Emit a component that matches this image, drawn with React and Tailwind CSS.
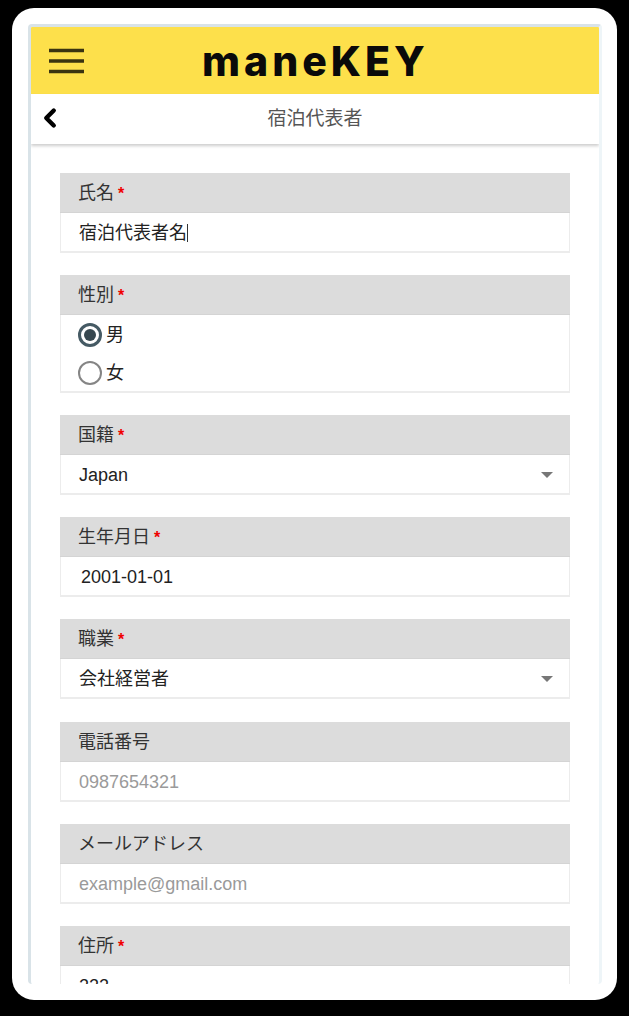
import { ChevronLeft } from "lucide-react";

const font = "font-['Liberation_Sans','Noto_Sans_CJK_JP',sans-serif]";

const Required = () => <span className="ml-1 text-[16px] leading-none font-bold text-[#f00000]">*</span>;

const Field = ({ label, required, mb = "mb-[22px]", children }) => (
  <div className={`${mb} border-x border-b-2 border-[#ececec]`}>
    <div className="-mx-px flex h-10 items-center border-b border-[#d4d4d4] bg-[#dcdcdc] pt-0.5 pl-[18px] text-[18px] text-[#333]">
      {label}
      {required && <Required />}
    </div>
    {children}
  </div>
);

const Value = ({ children, gray, arrow, date }) => (
  <div className={`flex h-[38px] items-center pt-0.5 pr-4 text-[18px] ${date ? "pl-5" : "pl-[18px]"} ${gray ? "text-[#9a9a9a]" : "text-[#222]"}`}>
    <span className="flex-1">{children}</span>
    {arrow && <span className="h-0 w-0 border-x-[6px] border-t-[6px] border-x-transparent border-t-[#777]" />}
  </div>
);

const Radio = ({ checked, label }) => (
  <div className="flex h-[38px] items-center pt-0.5 pl-[17px] text-[18px] text-[#222]">
    <span className={`mr-1 flex h-6 w-6 items-center justify-center rounded-full ${checked ? "border-[3px] border-[#455a64]" : "border-2 border-[#858585]"}`}>
      {checked && <span className="h-3 w-3 rounded-full bg-[#37474f]" />}
    </span>
    {label}
  </div>
);

export default function App() {
  return (
    <div className={`h-[1016px] w-[629px] overflow-hidden bg-black pt-2 pl-3 ${font}`}>
      <div className="h-[992px] w-[605px] rounded-[22px] bg-white px-4 pt-4">
        <div className="h-[960px] w-[574px] overflow-hidden rounded-t rounded-b border-x-[3px] border-t-[3px] border-l-[#d9e3e8] border-r-[#eef5f8] border-t-[#d9e3e8]">
          <header className="relative flex h-[67px] items-center bg-[#fde04b]">
            <svg className="ml-[18px]" width="35" height="26" viewBox="0 0 35 26">
              <path d="M0 2.5h35M0 13h35M0 23.5h35" stroke="#3a3410" strokeWidth="3.5" />
            </svg>
            <span className="absolute left-[171px] top-[9px] font-['Inter',sans-serif] text-[41px] leading-[50px] font-extrabold tracking-[4px] text-[#0a0a0a]">
              maneKEY
            </span>
          </header>
          <div className="relative z-10 flex h-[50px] items-center justify-center bg-white text-[19px] text-[#555] shadow-[0_2px_3px_rgba(0,0,0,0.2)]">
            <ChevronLeft className="absolute left-[4px] top-[9px] text-black" size={30} strokeWidth={3.5} />
            宿泊代表者
          </div>
          <main className="px-[29px] pt-[29px]">
            <Field label="氏名" required>
              <Value>
                宿泊代表者名<span className="inline-block h-[18px] w-px translate-y-[3px] bg-[#333]" />
              </Value>
            </Field>
            <Field label="性別" required>
              <Radio checked label="男" />
              <Radio label="女" />
            </Field>
            <Field label="国籍" required>
              <Value arrow>Japan</Value>
            </Field>
            <Field label="生年月日" required>
              <Value date>2001-01-01</Value>
            </Field>
            <Field label="職業" required mb="mb-[23px]">
              <Value arrow>会社経営者</Value>
            </Field>
            <Field label="電話番号">
              <Value gray>0987654321</Value>
            </Field>
            <Field label="メールアドレス">
              <Value gray>example@gmail.com</Value>
            </Field>
            <Field label="住所" required>
              <Value>222</Value>
            </Field>
          </main>
        </div>
      </div>
    </div>
  );
}
